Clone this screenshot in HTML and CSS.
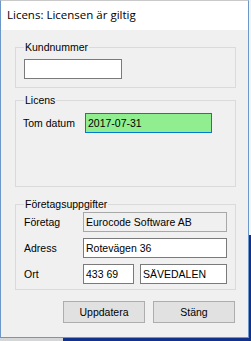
FILE: index.html
```html
<!DOCTYPE html>
<html>
	<head>
		<meta charset="UTF-8">
		<title>Licens</title>
		<link rel="stylesheet" href="styles.css">
	</head>
	<body>
		<div class="window">
			<div class="titlebar">Licens: Licensen är giltig</div>
			<div class="content">
				<fieldset class="group group-kund">
					<legend>Kundnummer</legend>
					<input class="box box-kund" type="text" value="">
				</fieldset>
				<fieldset class="group group-licens">
					<legend>Licens</legend>
					<div class="row-licens">
						<label>Tom datum</label>
						<input class="box box-date" type="text" value="2017-07-31">
					</div>
				</fieldset>
				<fieldset class="group group-firma">
					<legend>Företagsuppgifter</legend>
					<div class="form-grid">
						<label>Företag</label>
						<input class="box box-readonly" type="text" value="Eurocode Software AB" readonly>
						<label>Adress</label>
						<input class="box" type="text" value="Rotevägen 36">
						<label>Ort</label>
						<div class="ort">
							<input class="box box-zip" type="text" value="433 69">
							<input class="box box-city" type="text" value="SÄVEDALEN">
						</div>
					</div>
				</fieldset>
				<div class="buttons">
					<button class="btn">Uppdatera</button>
					<button class="btn">Stäng</button>
				</div>
			</div>
		</div>
		<div class="desktop">
			<div class="desktop-left"></div>
			<div class="desktop-right"></div>
		</div>
	</body>
</html>
```

FILE: styles.css
```css
* {
	margin: 0;
	padding: 0;
	box-sizing: border-box;
}
html {
	background: linear-gradient(to bottom, #f2f4f6 235px, #12318c 235px);
}
body {
	width: 251px;
	height: 341px;
	font-family: "Liberation Sans", Arial, sans-serif;
	font-size: 10.5px;
	color: #000;
}
.window {
	width: 249px;
	height: 338px;
	border: 1px solid #6b98c8;
	border-top-color: #c9c9c9;
	background-color: #f0f0f0;
	display: flex;
	flex-direction: column;
}
.titlebar {
	height: 29px;
	line-height: 27px;
	background-color: #fff;
	padding-left: 6px;
	font-family: "Open Sans", "Noto Sans", sans-serif;
	font-size: 11.5px;
}
.content {
	padding: 11px 12px 0 14px;
	display: flex;
	flex-direction: column;
}
.group {
	border: 1px solid #dadada;
	padding: 0 8px 0 8px;
	width: 221px;
}
.group legend {
	padding: 0 1px;
	line-height: 13px;
	height: 13px;
}
.group-kund {
	padding-top: 5px;
	padding-bottom: 8px;
}
.group-licens {
	margin-top: 6px;
	padding-top: 6px;
	padding-bottom: 53px;
}
.group-firma {
	margin-top: 11px;
	padding-top: 1px;
	padding-bottom: 5px;
}
.box {
	height: 20px;
	border: 1px solid #7a7a7a;
	background-color: #fff;
	font-family: "Liberation Sans", Arial, sans-serif;
	font-size: 10.5px;
	color: #000;
	padding: 0 2px;
	outline: none;
	display: block;
	width: 100%;
}
.box-kund {
	width: 98px;
}
.row-licens {
	display: grid;
	grid-template-columns: 61px 127px;
	align-items: center;
}
.row-licens label {
	margin-left: -1px;
}
.box-date {
	background-color: #90ee90;
	border-color: #0078d7;
}
.box-readonly {
	background-color: #f0f0f0;
	border-color: #a8a8a8;
}
.form-grid {
	display: grid;
	grid-template-columns: 59px 1fr;
	row-gap: 6px;
	align-items: center;
}
.ort {
	display: flex;
	gap: 6px;
}
.box-zip {
	width: 51px;
}
.box-city {
	flex: 1;
}
.buttons {
	margin-top: 11px;
	display: flex;
	justify-content: flex-end;
	gap: 8px;
	padding-right: 1px;
}
.btn {
	width: 82px;
	height: 22px;
	border: 1px solid #adadad;
	background-color: #e1e1e1;
	font-family: "Liberation Sans", Arial, sans-serif;
	font-size: 10.5px;
	color: #000;
}
.desktop {
	display: flex;
	height: 3px;
}
.desktop-left {
	width: 63px;
	background-color: #d4d6d8;
}
.desktop-right {
	flex: 1;
	background-color: #12318c;
}
```
